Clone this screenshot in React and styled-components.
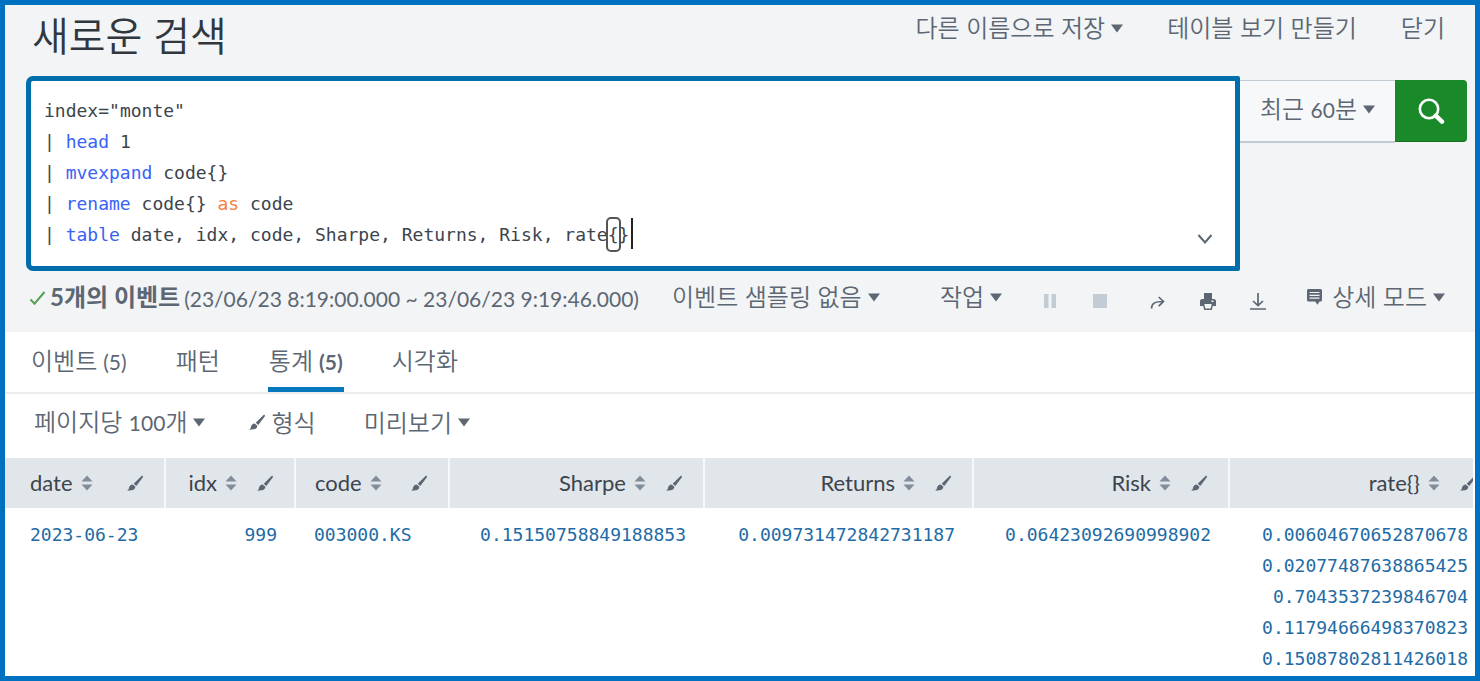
import React, { useState } from "react";
import styled, { createGlobalStyle } from "styled-components";

const sans = `Lato, "Noto Sans CJK KR", "Liberation Sans", sans-serif`;
const mono = `"DejaVu Sans Mono", "Noto Sans CJK KR", monospace`;

const GlobalStyle = createGlobalStyle`
  *, *::before, *::after { box-sizing: border-box; }
  body { margin: 0; font-family: ${sans}; color: #5c6773; background: #fff; }
`;

const Frame = styled.div`
  min-height: 100vh;
  border: 5px solid #0070c0;
  background: #fff;
  overflow: hidden;
`;

const SearchHeader = styled.header`
  background: #f2f4f5;
  padding: 0 8px 0 21px;
`;

const TitleRow = styled.div`
  display: flex;
  justify-content: space-between;
  align-items: flex-start;
  height: 71px;
  padding: 0 22px 0 6px;
`;

const Title = styled.h1`
  margin: 0;
  font-size: 40px;
  font-weight: 350;
  line-height: 62px;
  color: #31373e;
`;

const TitleActions = styled.div`
  display: flex;
  gap: 44px;
`;

const TextButton = styled.button`
  display: inline-flex;
  align-items: center;
  gap: 6px;
  padding: 0;
  border: 0;
  background: none;
  font-family: inherit;
  font-size: 24px;
  font-weight: 350;
  line-height: 46px;
  color: #5c6773;
  white-space: nowrap;
  cursor: pointer;
`;

const Num = styled.span`
  font-size: 21px;
  font-weight: 400;
`;

const SearchBar = styled.div`
  display: flex;
  align-items: flex-start;
`;

const Editor = styled.div`
  position: relative;
  flex: 1;
  min-width: 0;
  padding: 14px 13px 16px;
  border: 5px solid #006eaa;
  border-radius: 7px 2px 2px 7px;
  background: #fff;
`;

const Code = styled.div`
  min-height: 155px;
  font-family: ${mono};
  font-size: 18px;
  line-height: 31px;
  white-space: pre-wrap;
  color: #3c444d;
`;

const CodeLine = styled.div`
  min-height: 31px;
`;

const KeyCapture = styled.textarea`
  position: absolute;
  inset: 0;
  width: 100%;
  height: 100%;
  padding: 0;
  border: 0;
  resize: none;
  outline: none;
  background: transparent;
  caret-color: transparent;
  cursor: text;
`;

const Token = styled.span`
  color: ${({ $kind }) => ($kind === "command" ? "#3863f5" : $kind === "keyword" ? "#f7813d" : "inherit")};
`;

const BraceMatch = styled.span`
  position: relative;
  &::after {
    content: "";
    position: absolute;
    inset: -7px -2px;
    border: 2px solid #555;
    border-radius: 5px;
  }
`;

const Caret = styled.span`
  position: relative;
  &::after {
    content: "";
    position: absolute;
    left: 2px;
    top: -6px;
    width: 2px;
    height: 31px;
    background: #222;
  }
`;

const ExpandButton = styled.button`
  position: absolute;
  right: 18px;
  bottom: 18px;
  display: flex;
  padding: 4px;
  border: 0;
  background: none;
  color: #5c6773;
  cursor: pointer;
`;

const TimePicker = styled(TextButton)`
  justify-content: center;
  width: 155px;
  height: 63px;
  margin-top: 4px;
  padding-bottom: 4px;
  border: solid #c3cbd4;
  border-width: 1px 0 2px;
  background: #f7f8fa;
`;

const SearchButton = styled.button`
  display: flex;
  align-items: center;
  justify-content: center;
  width: 72px;
  height: 62px;
  margin-top: 4px;
  padding: 0;
  border: 0;
  border-bottom: 1px solid #15701f;
  border-radius: 0 4px 4px 0;
  background: #1a8929;
  color: #fff;
  cursor: pointer;
`;

const StatusRow = styled.div`
  display: flex;
  align-items: center;
  height: 61px;
  padding: 0 22px 9px 3px;
`;

const JobStatus = styled.p`
  display: flex;
  align-items: center;
  margin: 0 33px 0 0;
  font-size: 24px;
  line-height: 44px;
  white-space: nowrap;
`;

const EventCount = styled.strong`
  margin: 0 4px;
  font-weight: 700;
`;

const TimeRange = styled.span`
  padding-top: 3px;
  font-size: 21px;
`;

const JobControls = styled.div`
  display: flex;
  align-items: center;
  margin-left: auto;
`;

const IconGroup = styled.div`
  display: flex;
  margin-left: ${({ $gap }) => $gap}px;
`;

const IconButton = styled.button`
  display: flex;
  align-items: center;
  justify-content: center;
  width: 50px;
  height: 44px;
  padding: 8px 0 0;
  border: 0;
  background: none;
  color: #5c6773;
  cursor: pointer;
  &:disabled { color: #c3cbd4; cursor: default; }
`;

const ModeButton = styled(TextButton)`
  margin-left: 24px;
`;

const ModeLabel = styled.span`
  padding-left: 4px;
`;

const Tabs = styled.div`
  display: flex;
  gap: 47px;
  height: 62px;
  padding: 0 25px;
  border-bottom: 2px solid #ebeef1;
`;

const Tab = styled.button`
  display: flex;
  gap: 6px;
  align-items: center;
  height: 60px;
  padding: 0 1px;
  border: solid transparent;
  border-width: 0 0 5px;
  border-bottom-color: ${({ $active }) => ($active ? "#0877bd" : "transparent")};
  background: none;
  font-family: inherit;
  font-size: 24px;
  font-weight: 350;
  color: #5c6773;
  white-space: nowrap;
  cursor: pointer;
`;

const TabCount = styled.span`
  padding-top: 3px;
  font-size: 21px;
  font-weight: ${({ $active }) => ($active ? 700 : 400)};
`;

const ResultControls = styled.div`
  display: flex;
  align-items: center;
  gap: 44px;
  height: 64px;
  padding: 0 29px 7px;
`;

const FormatButton = styled(TextButton)`
  margin-right: 4px;
`;

const TableScroller = styled.div`
  margin-right: 2px;
  overflow-x: auto;
  scrollbar-width: none;
`;

const ResultTable = styled.table`
  width: 100%;
  min-width: 1493px;
  table-layout: fixed;
  border-collapse: collapse;
`;

const Col = styled.col`
  width: ${({ $width }) => $width}px;
`;

const HeadCell = styled.th`
  height: 50px;
  padding: 0 21px 0 25px;
  border-right: 2px solid #f7f8fa;
  background: #e1e6eb;
  font-size: 22px;
  font-weight: 400;
  color: #3c444d;
  & + & { padding-left: 19px; }
`;

const HeadContent = styled.div`
  display: flex;
  align-items: center;
  justify-content: ${({ $right }) => ($right ? "flex-end" : "flex-start")};
  gap: 8px;
`;

const SortButton = styled.button`
  display: flex;
  align-items: center;
  gap: 8px;
  padding: 0;
  border: 0;
  background: none;
  font: inherit;
  line-height: 32px;
  color: inherit;
  cursor: pointer;
`;

const FormatColumn = styled.button`
  display: flex;
  margin-left: ${({ $push }) => ($push ? "auto" : "12px")};
  padding: 0;
  border: 0;
  background: none;
  color: #5c6773;
  cursor: pointer;
`;

const Cell = styled.td`
  padding: 11px 18px 0 25px;
  vertical-align: top;
  text-align: ${({ $right }) => ($right ? "right" : "left")};
  font-family: ${mono};
  font-size: 18px;
  line-height: 31px;
  color: #1e6ba5;
  & + & { padding-left: 19px; }
  &:last-child { padding-right: 30px; }
`;

const Value = styled.div``;

const CaretDown = () => (
  <svg width="12" height="9" viewBox="0 0 12 9" aria-hidden="true">
    <path d="M0 0.5h12L6 8.5z" fill="currentColor" />
  </svg>
);

const Brush = () => (
  <svg width="16" height="17" viewBox="0 0 16 17" fill="currentColor" aria-hidden="true">
    <path d="M15.8 1.2c.3.4.2.8-.1 1.3L9.3 11 6.7 8.700 14.300 1.300c.6-.5 1.100-.6 1.500-.1z" />
    <path d="M5.700 9.400l2.700 2.400c-.4 2.300-1.500 3.300-3.700 3.500-1.500.2-2.900.3-4.500.5C1.500 14.800 1.700 14 2 12.700c.4-2 1.700-3.200 3.700-3.300z" />
  </svg>
);

const SortIcon = () => (
  <svg width="12" height="16" viewBox="0 0 12 16" fill="#818d99" aria-hidden="true">
    <path d="M6 .5L11.500 6.500H.5zM6 15.500L.5 9.500h11z" />
  </svg>
);

const Check = () => (
  <svg width="17" height="16" viewBox="0 0 17 16" aria-hidden="true">
    <path d="M1.500 10.500l4 4.200L15.500 3" fill="none" stroke="#53a051" strokeWidth="2" />
  </svg>
);

const Magnifier = () => (
  <svg width="28" height="28" viewBox="0 0 28 28" fill="none" stroke="currentColor" aria-hidden="true">
    <circle cx="12" cy="12" r="9.200" strokeWidth="2.600" />
    <path d="M18.700 18.700l6.300 6" strokeWidth="4.400" strokeLinecap="round" />
  </svg>
);

const Chevron = () => (
  <svg width="16" height="10" viewBox="0 0 16 10" fill="none" stroke="currentColor" strokeWidth="2" aria-hidden="true">
    <path d="M1.500 1L8 8.500 14.500 1" />
  </svg>
);

const Pause = () => (
  <svg width="12" height="14" viewBox="0 0 12 14" fill="currentColor" aria-hidden="true">
    <path d="M0 0h4.500v14H0zM7.500 0H12v14H7.500z" />
  </svg>
);

const Stop = () => (
  <svg width="14" height="14" viewBox="0 0 14 14" fill="currentColor" aria-hidden="true">
    <path d="M0 0h14v14H0z" />
  </svg>
);

const Share = () => (
  <svg width="16" height="16" viewBox="0 0 16 16" fill="none" stroke="currentColor" strokeWidth="1.700" aria-hidden="true">
    <path d="M1.500 15.500C1.700 10.500 4.500 8.500 13 8.500M8.700 4l4.800 4.500-4.800 4.700" />
  </svg>
);

const Printer = () => (
  <svg width="16" height="17" viewBox="0 0 16 17" fill="currentColor" fillRule="evenodd" aria-hidden="true">
    <path d="M4 0h8v6H4zM1.500 6h13L16 7.500V13h-3.200l-1 4H4.200l-1-4H0V7.500zM4.300 11l1 4.500h5.400l1-4.500zM11.500 7.500v1.500h2V7.500z" />
  </svg>
);

const Download = () => (
  <svg width="16" height="17" viewBox="0 0 16 17" fill="none" stroke="currentColor" strokeWidth="1.700" aria-hidden="true">
    <path d="M8 0v12.500M3 8l5 4.700L13 8M0 16h16" />
  </svg>
);

const Comment = () => (
  <svg width="15" height="16" viewBox="0 0 15 16" aria-hidden="true">
    <path d="M1.500 0h12Q15 0 15 1.500v9.500q0 1.500-1.500 1.500H12.500l-2 3.200-2.300-3.200H1.500Q0 12.500 0 11V1.500Q0 0 1.500 0z" fill="#5c6773" />
    <path d="M2.500 3.500h10M2.500 6.300h10M2.500 9.100h10" stroke="#f2f4f5" strokeWidth="1.200" />
  </svg>
);

const INITIAL_QUERY = `index="monte"
| head 1
| mvexpand code{}
| rename code{} as code
| table date, idx, code, Sharpe, Returns, Risk, rate{}`;

const kindOf = (part, previous) => {
  if (/\|\s*$/.test(previous || "") && /^\w+$/.test(part)) return "command";
  return part === "as" ? "keyword" : undefined;
};

function HighlightedLine({ text, hasCaret }) {
  const endsWithPair = hasCaret && text.endsWith("{}");
  const body = endsWithPair ? text.slice(0, -2) : text;
  const parts = body.split(/(\b\w+\b)/);
  return (
    <CodeLine>
      {parts.map((part, i) => {
        const kind = kindOf(part, parts[i - 1]);
        return kind ? <Token key={i} $kind={kind}>{part}</Token> : part;
      })}
      {endsWithPair && <><BraceMatch>{"{"}</BraceMatch>{"}"}</>}
      {hasCaret && <Caret />}
    </CodeLine>
  );
}

// The textarea only collects keystrokes; the highlighted code is drawn from state.
function QueryEditor() {
  const [query, setQuery] = useState(INITIAL_QUERY);
  const lines = query.split("\n");
  const onKeyDown = (e) => {
    if (e.key === "Backspace") setQuery((q) => q.slice(0, -1));
  };
  return (
    <Editor>
      <Code>
        {lines.map((text, i) => (
          <HighlightedLine key={i} text={text} hasCaret={i === lines.length - 1} />
        ))}
      </Code>
      <KeyCapture
        aria-label="검색"
        spellCheck={false}
        value=""
        onChange={(e) => {
          const typed = e.target.value;
          setQuery((q) => q + typed);
        }}
        onKeyDown={onKeyDown}
      />
      <ExpandButton aria-label="펼치기"><Chevron /></ExpandButton>
    </Editor>
  );
}

const columns = [
  { name: "date", width: 160, values: ["2023-06-23"] },
  { name: "idx", width: 130, right: true, values: ["999"] },
  { name: "code", width: 154, values: ["003000.KS"] },
  { name: "Sharpe", width: 255, right: true, values: ["0.15150758849188853"] },
  { name: "Returns", width: 269, right: true, values: ["0.009731472842731187"] },
  { name: "Risk", width: 256, right: true, values: ["0.06423092690998902"] },
  {
    name: "rate{}",
    width: 269,
    right: true,
    values: [
      "0.00604670652870678",
      "0.02077487638865425",
      "0.7043537239846704",
      "0.11794666498370823",
      "0.15087802811426018",
    ],
  },
];

const tabs = [
  { label: "이벤트", count: 5 },
  { label: "패턴" },
  { label: "통계", count: 5 },
  { label: "시각화" },
];

export default function App() {
  const [activeTab, setActiveTab] = useState("통계");

  return (
    <Frame>
      <GlobalStyle />
      <SearchHeader>
        <TitleRow>
          <Title>새로운 검색</Title>
          <TitleActions>
            <TextButton aria-haspopup="menu">다른 이름으로 저장<CaretDown /></TextButton>
            <TextButton>테이블 보기 만들기</TextButton>
            <TextButton>닫기</TextButton>
          </TitleActions>
        </TitleRow>
        <SearchBar>
          <QueryEditor />
          <TimePicker aria-haspopup="menu"><span>최근 <Num>60</Num>분</span><CaretDown /></TimePicker>
          <SearchButton aria-label="검색 실행"><Magnifier /></SearchButton>
        </SearchBar>
        <StatusRow>
          <JobStatus>
            <Check />
            <EventCount>5개의 이벤트</EventCount>
            <TimeRange>(23/06/23 8:19:00.000 ~ 23/06/23 9:19:46.000)</TimeRange>
          </JobStatus>
          <TextButton aria-haspopup="menu">이벤트 샘플링 없음<CaretDown /></TextButton>
          <JobControls>
            <TextButton aria-haspopup="menu">작업<CaretDown /></TextButton>
            <IconGroup $gap={23}>
              <IconButton disabled aria-label="일시 중지"><Pause /></IconButton>
              <IconButton disabled aria-label="중지"><Stop /></IconButton>
            </IconGroup>
            <IconGroup $gap={8}>
              <IconButton aria-label="공유"><Share /></IconButton>
              <IconButton aria-label="인쇄"><Printer /></IconButton>
              <IconButton aria-label="내보내기"><Download /></IconButton>
            </IconGroup>
            <ModeButton aria-haspopup="menu"><Comment /><ModeLabel>상세 모드</ModeLabel><CaretDown /></ModeButton>
          </JobControls>
        </StatusRow>
      </SearchHeader>
      <main>
        <Tabs role="tablist">
          {tabs.map(({ label, count }) => {
            const active = label === activeTab;
            return (
              <Tab key={label} role="tab" aria-selected={active} $active={active} onClick={() => setActiveTab(label)}>
                {label}
                {count && <TabCount $active={active}>({count})</TabCount>}
              </Tab>
            );
          })}
        </Tabs>
        <ResultControls>
          <TextButton aria-haspopup="menu"><span>페이지당 <Num>100</Num>개</span><CaretDown /></TextButton>
          <FormatButton><Brush />형식</FormatButton>
          <TextButton aria-haspopup="menu">미리보기<CaretDown /></TextButton>
        </ResultControls>
        <TableScroller>
          <ResultTable>
            <colgroup>
              {columns.map(({ name, width }) => <Col key={name} $width={width} />)}
            </colgroup>
            <thead>
              <tr>
                {columns.map(({ name, right }) => (
                  <HeadCell key={name} scope="col">
                    <HeadContent $right={right}>
                      <SortButton>{name}<SortIcon /></SortButton>
                      <FormatColumn $push={!right} aria-label={`${name} 형식`}><Brush /></FormatColumn>
                    </HeadContent>
                  </HeadCell>
                ))}
              </tr>
            </thead>
            <tbody>
              <tr>
                {columns.map(({ name, right, values }) => (
                  <Cell key={name} $right={right}>
                    {values.map((value) => <Value key={value}>{value}</Value>)}
                  </Cell>
                ))}
              </tr>
            </tbody>
          </ResultTable>
        </TableScroller>
      </main>
    </Frame>
  );
}
